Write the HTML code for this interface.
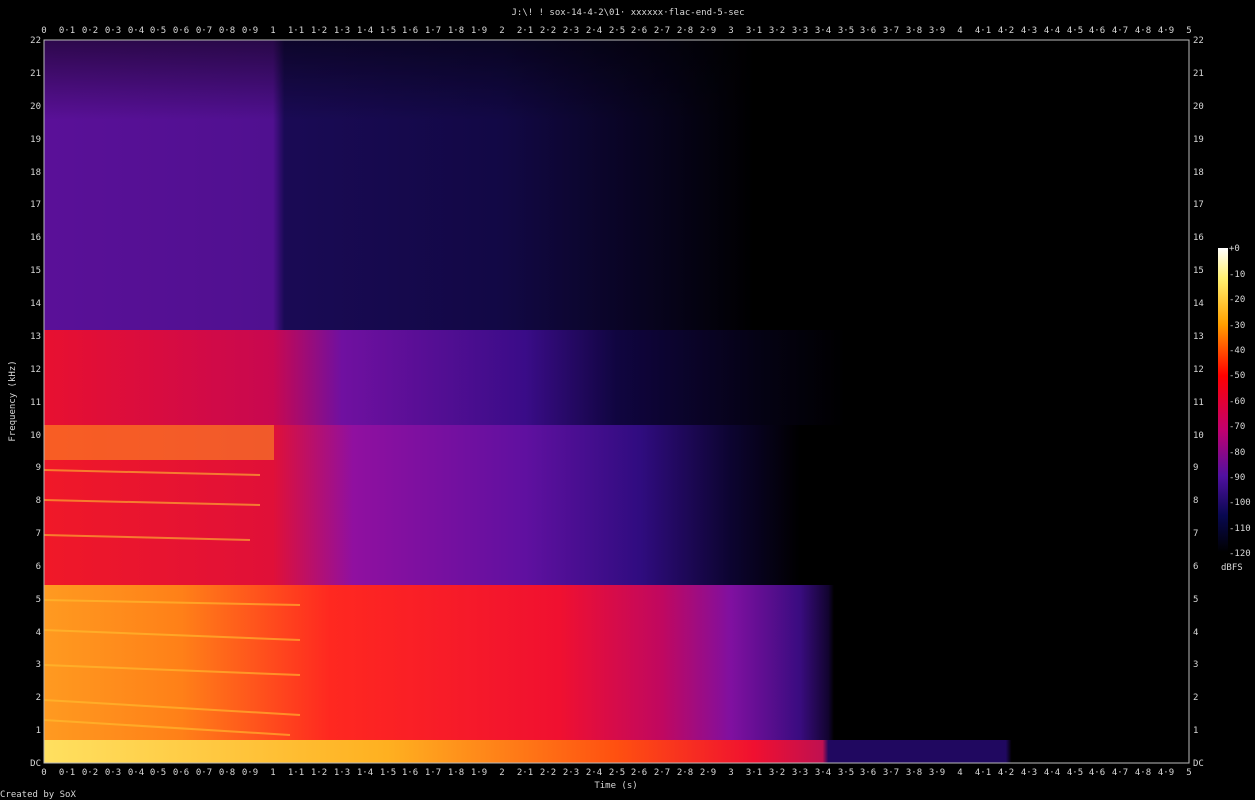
<!DOCTYPE html>
<html><head><meta charset="utf-8"><style>
html,body{margin:0;padding:0;background:#000;width:1255px;height:800px;overflow:hidden}
svg{display:block}
text{font-family:"DejaVu Sans Mono","Liberation Mono",monospace;font-size:9px;fill:#d8d8d8}
</style></head><body>
<svg width="1255" height="800" viewBox="0 0 1255 800" xmlns="http://www.w3.org/2000/svg">
<defs>
<linearGradient id="low" x1="0" x2="1">
<stop offset="0" stop-color="#ff9a20"/><stop offset="0.12" stop-color="#ff8018"/><stop offset="0.25" stop-color="#ff2820"/><stop offset="0.45" stop-color="#f01030"/><stop offset="0.54" stop-color="#c00860"/><stop offset="0.6" stop-color="#8010a0"/><stop offset="0.66" stop-color="#3a0c80"/><stop offset="0.685" stop-color="#120430"/><stop offset="0.69" stop-color="#000"/><stop offset="1" stop-color="#000"/>
</linearGradient>
<linearGradient id="bot" x1="0" x2="1">
<stop offset="0" stop-color="#ffe060"/><stop offset="0.3" stop-color="#ffb020"/><stop offset="0.5" stop-color="#ff5010"/><stop offset="0.62" stop-color="#f01030"/><stop offset="0.68" stop-color="#c01050"/><stop offset="0.685" stop-color="#200860"/><stop offset="0.84" stop-color="#200860"/><stop offset="0.845" stop-color="#000"/>
</linearGradient>
<linearGradient id="mid" x1="0" x2="1">
<stop offset="0" stop-color="#f01828"/><stop offset="0.2" stop-color="#e01038"/><stop offset="0.27" stop-color="#9010a0"/><stop offset="0.42" stop-color="#6010a0"/><stop offset="0.52" stop-color="#300c80"/><stop offset="0.6" stop-color="#0c0430"/><stop offset="0.66" stop-color="#000"/>
</linearGradient>
<linearGradient id="m2" x1="0" x2="1">
<stop offset="0" stop-color="#e81030"/><stop offset="0.2" stop-color="#c80850"/><stop offset="0.26" stop-color="#7010a0"/><stop offset="0.42" stop-color="#3a0c88"/><stop offset="0.5" stop-color="#100540"/><stop offset="0.62" stop-color="#050215"/><stop offset="0.7" stop-color="#000"/>
</linearGradient>
<linearGradient id="hi" x1="0" x2="1">
<stop offset="0" stop-color="#5a1098"/><stop offset="0.2" stop-color="#501090"/><stop offset="0.21" stop-color="#1a0a55"/><stop offset="0.4" stop-color="#120845"/><stop offset="0.55" stop-color="#060318"/><stop offset="0.62" stop-color="#000"/>
</linearGradient>
<linearGradient id="fadeV" x1="0" y1="0" x2="0" y2="1">
<stop offset="0" stop-color="#000" stop-opacity="0.5"/><stop offset="1" stop-color="#000" stop-opacity="0"/>
</linearGradient>
<linearGradient id="cb" x1="0" y1="0" x2="0" y2="1">
<stop offset="0" stop-color="#fff"/><stop offset="0.1" stop-color="#fff070"/><stop offset="0.25" stop-color="#ffa000"/><stop offset="0.42" stop-color="#ff0000"/><stop offset="0.6" stop-color="#c00070"/><stop offset="0.75" stop-color="#5010a0"/><stop offset="0.88" stop-color="#080850"/><stop offset="1" stop-color="#000"/>
</linearGradient>
</defs>
<rect x="44" y="40" width="1145" height="723" fill="#000"/>
<rect x="44" y="40" width="1145" height="290" fill="url(#hi)"/>
<rect x="44" y="40" width="1145" height="80" fill="url(#fadeV)"/>
<rect x="44" y="330" width="1145" height="95" fill="url(#m2)"/>
<rect x="44" y="425" width="1145" height="160" fill="url(#mid)"/>
<rect x="44" y="585" width="1145" height="155" fill="url(#low)"/>
<rect x="44" y="425" width="230" height="35" fill="#ff9820" opacity="0.55"/>
<rect x="44" y="740" width="1145" height="23" fill="url(#bot)"/>
<g stroke="#ffc030" stroke-width="2" opacity="0.6">
<line x1="44" y1="470" x2="260" y2="475"/><line x1="44" y1="500" x2="260" y2="505"/><line x1="44" y1="535" x2="250" y2="540"/><line x1="44" y1="600" x2="300" y2="605"/><line x1="44" y1="630" x2="300" y2="640"/><line x1="44" y1="665" x2="300" y2="675"/><line x1="44" y1="700" x2="300" y2="715"/><line x1="44" y1="720" x2="290" y2="735"/>
</g>
<rect x="44" y="40" width="1145" height="723" fill="none" stroke="#bbb" stroke-width="1"/>
<rect x="1218" y="248" width="10" height="304" fill="url(#cb)"/>
<g text-anchor="start">
<text x="1229" y="251">+0</text><text x="1229" y="277">-10</text><text x="1229" y="302">-20</text><text x="1229" y="328">-30</text><text x="1229" y="353">-40</text><text x="1229" y="378">-50</text><text x="1229" y="404">-60</text><text x="1229" y="429">-70</text><text x="1229" y="455">-80</text><text x="1229" y="480">-90</text><text x="1229" y="505">-100</text><text x="1229" y="531">-110</text><text x="1229" y="556">-120</text>
<text x="1221" y="570">dBFS</text>
</g>
<text x="628" y="15" text-anchor="middle">J:\! ! sox-14-4-2\01· xxxxxx·flac-end-5-sec</text>
<text x="616" y="788" text-anchor="middle">Time (s)</text>
<text x="0" y="797">Created by SoX</text>
<text transform="translate(15,401) rotate(-90)" text-anchor="middle">Frequency (kHz)</text>
<g text-anchor="end">
<text x="41" y="43">22</text><text x="41" y="76">21</text><text x="41" y="109">20</text><text x="41" y="142">19</text><text x="41" y="175">18</text><text x="41" y="207">17</text><text x="41" y="240">16</text><text x="41" y="273">15</text><text x="41" y="306">14</text><text x="41" y="339">13</text><text x="41" y="372">12</text><text x="41" y="405">11</text><text x="41" y="438">10</text><text x="41" y="470">9</text><text x="41" y="503">8</text><text x="41" y="536">7</text><text x="41" y="569">6</text><text x="41" y="602">5</text><text x="41" y="635">4</text><text x="41" y="667">3</text><text x="41" y="700">2</text><text x="41" y="733">1</text><text x="41" y="766">DC</text>
</g>
<g text-anchor="start">
<text x="1193" y="43">22</text><text x="1193" y="76">21</text><text x="1193" y="109">20</text><text x="1193" y="142">19</text><text x="1193" y="175">18</text><text x="1193" y="207">17</text><text x="1193" y="240">16</text><text x="1193" y="273">15</text><text x="1193" y="306">14</text><text x="1193" y="339">13</text><text x="1193" y="372">12</text><text x="1193" y="405">11</text><text x="1193" y="438">10</text><text x="1193" y="470">9</text><text x="1193" y="503">8</text><text x="1193" y="536">7</text><text x="1193" y="569">6</text><text x="1193" y="602">5</text><text x="1193" y="635">4</text><text x="1193" y="667">3</text><text x="1193" y="700">2</text><text x="1193" y="733">1</text><text x="1193" y="766">DC</text>
</g>
<g text-anchor="middle">
<text x="44" y="33">0</text><text x="67" y="33">0·1</text><text x="90" y="33">0·2</text><text x="113" y="33">0·3</text><text x="136" y="33">0·4</text><text x="158" y="33">0·5</text><text x="181" y="33">0·6</text><text x="204" y="33">0·7</text><text x="227" y="33">0·8</text><text x="250" y="33">0·9</text><text x="273" y="33">1</text><text x="296" y="33">1·1</text><text x="319" y="33">1·2</text><text x="342" y="33">1·3</text><text x="365" y="33">1·4</text><text x="388" y="33">1·5</text><text x="410" y="33">1·6</text><text x="433" y="33">1·7</text><text x="456" y="33">1·8</text><text x="479" y="33">1·9</text><text x="502" y="33">2</text><text x="525" y="33">2·1</text><text x="548" y="33">2·2</text><text x="571" y="33">2·3</text><text x="594" y="33">2·4</text><text x="617" y="33">2·5</text><text x="639" y="33">2·6</text><text x="662" y="33">2·7</text><text x="685" y="33">2·8</text><text x="708" y="33">2·9</text><text x="731" y="33">3</text><text x="754" y="33">3·1</text><text x="777" y="33">3·2</text><text x="800" y="33">3·3</text><text x="823" y="33">3·4</text><text x="846" y="33">3·5</text><text x="868" y="33">3·6</text><text x="891" y="33">3·7</text><text x="914" y="33">3·8</text><text x="937" y="33">3·9</text><text x="960" y="33">4</text><text x="983" y="33">4·1</text><text x="1006" y="33">4·2</text><text x="1029" y="33">4·3</text><text x="1052" y="33">4·4</text><text x="1075" y="33">4·5</text><text x="1097" y="33">4·6</text><text x="1120" y="33">4·7</text><text x="1143" y="33">4·8</text><text x="1166" y="33">4·9</text><text x="1189" y="33">5</text>
</g>
<g text-anchor="middle">
<text x="44" y="775">0</text><text x="67" y="775">0·1</text><text x="90" y="775">0·2</text><text x="113" y="775">0·3</text><text x="136" y="775">0·4</text><text x="158" y="775">0·5</text><text x="181" y="775">0·6</text><text x="204" y="775">0·7</text><text x="227" y="775">0·8</text><text x="250" y="775">0·9</text><text x="273" y="775">1</text><text x="296" y="775">1·1</text><text x="319" y="775">1·2</text><text x="342" y="775">1·3</text><text x="365" y="775">1·4</text><text x="388" y="775">1·5</text><text x="410" y="775">1·6</text><text x="433" y="775">1·7</text><text x="456" y="775">1·8</text><text x="479" y="775">1·9</text><text x="502" y="775">2</text><text x="525" y="775">2·1</text><text x="548" y="775">2·2</text><text x="571" y="775">2·3</text><text x="594" y="775">2·4</text><text x="617" y="775">2·5</text><text x="639" y="775">2·6</text><text x="662" y="775">2·7</text><text x="685" y="775">2·8</text><text x="708" y="775">2·9</text><text x="731" y="775">3</text><text x="754" y="775">3·1</text><text x="777" y="775">3·2</text><text x="800" y="775">3·3</text><text x="823" y="775">3·4</text><text x="846" y="775">3·5</text><text x="868" y="775">3·6</text><text x="891" y="775">3·7</text><text x="914" y="775">3·8</text><text x="937" y="775">3·9</text><text x="960" y="775">4</text><text x="983" y="775">4·1</text><text x="1006" y="775">4·2</text><text x="1029" y="775">4·3</text><text x="1052" y="775">4·4</text><text x="1075" y="775">4·5</text><text x="1097" y="775">4·6</text><text x="1120" y="775">4·7</text><text x="1143" y="775">4·8</text><text x="1166" y="775">4·9</text><text x="1189" y="775">5</text>
</g>
</svg>
</body></html>
